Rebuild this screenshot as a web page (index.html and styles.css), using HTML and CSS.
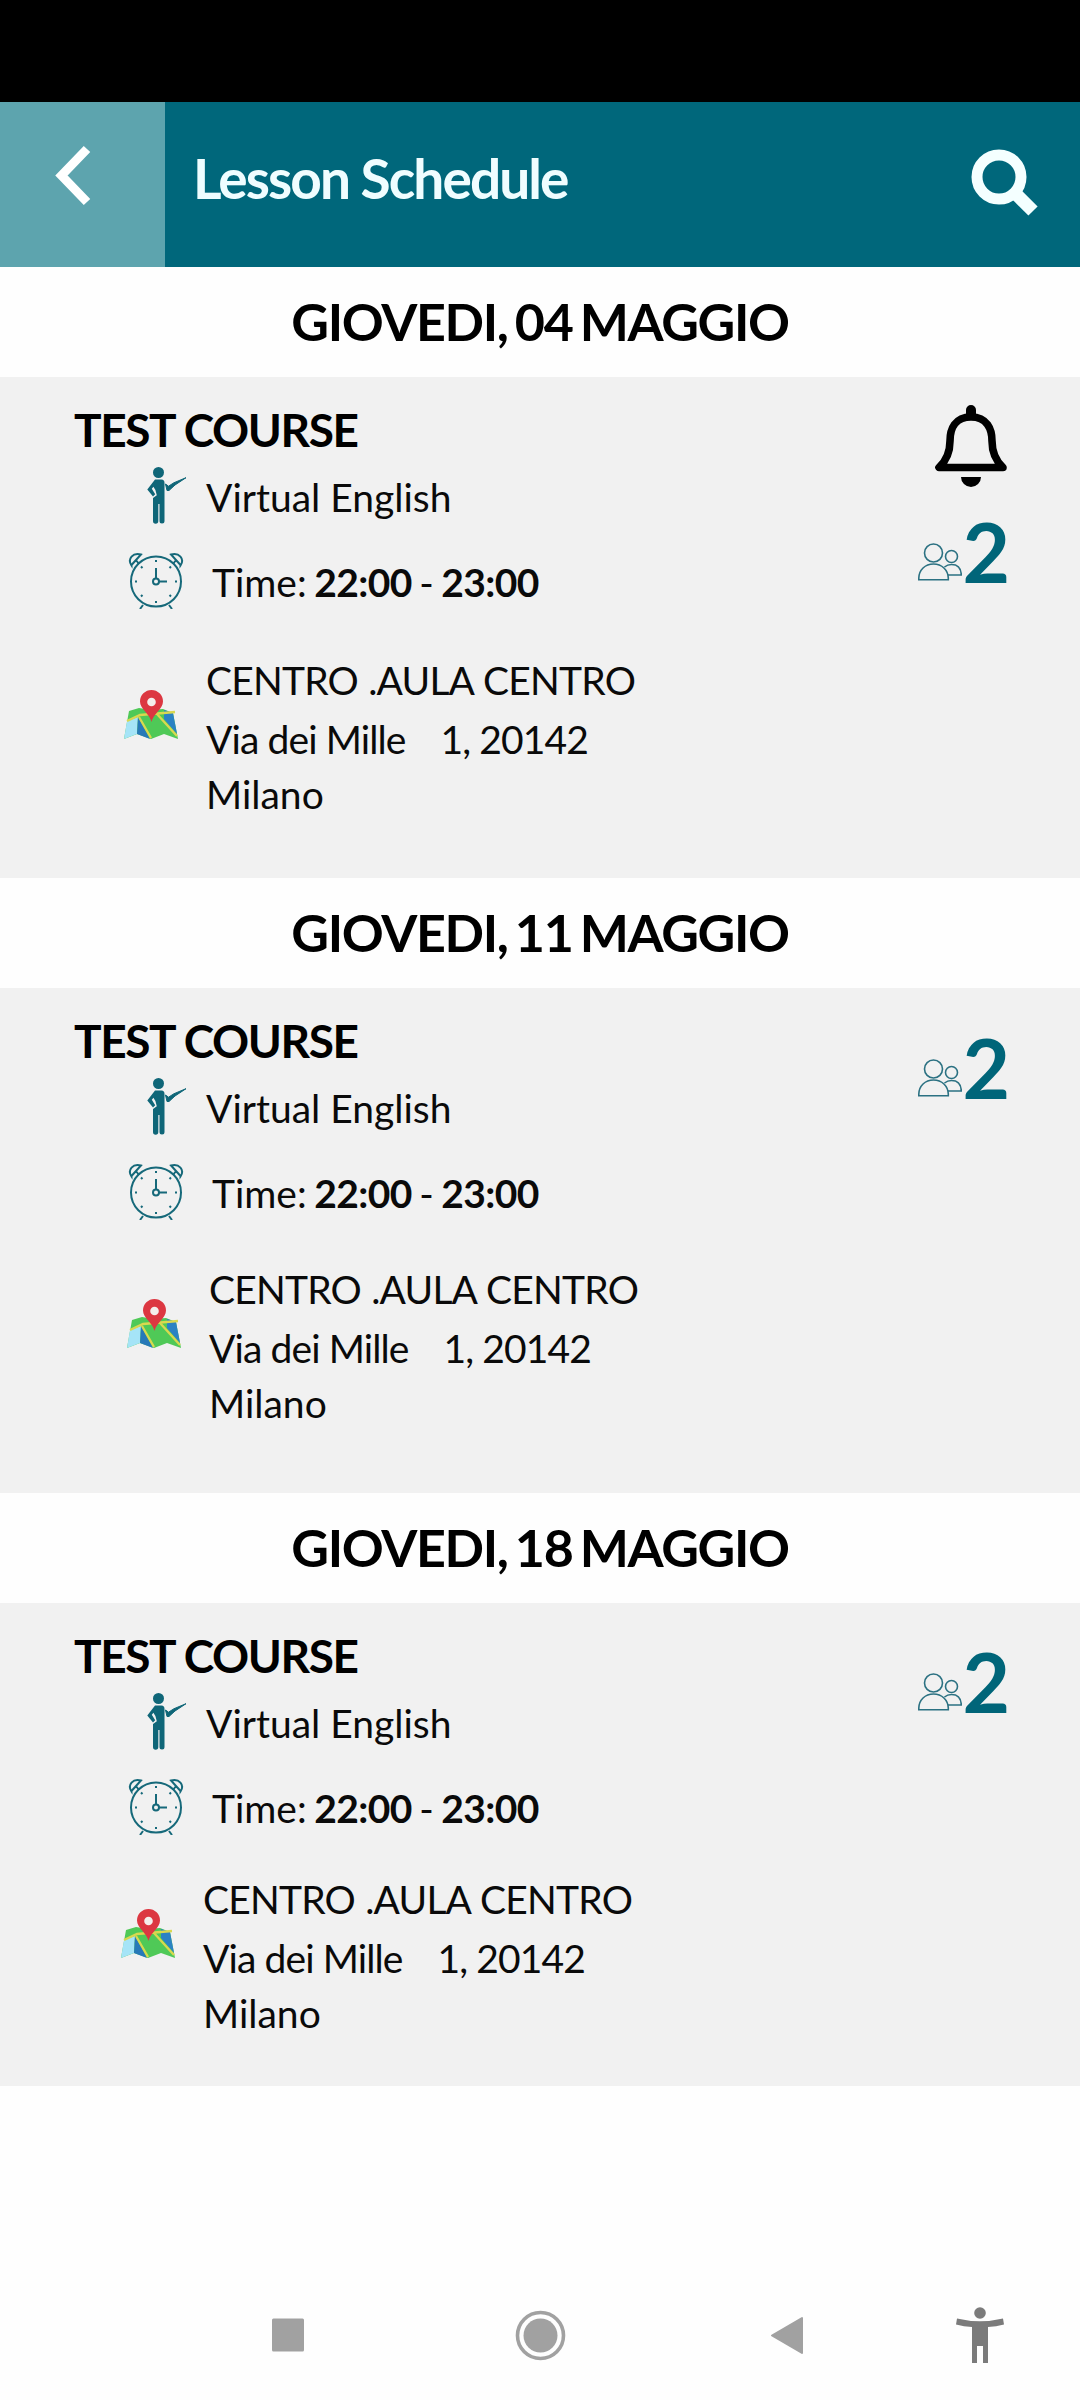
FILE: index.html
```html
<!DOCTYPE html>
<html lang="it">
<head>
    <meta charset="UTF-8">
    <meta name="viewport" content="width=device-width, initial-scale=1.0">
    <title>Lesson Schedule</title>
    <link rel="stylesheet" href="styles.css">
</head>
<body>

<!-- shared icons -->
<svg class="sprite" aria-hidden="true">
    <symbol id="teacher" viewBox="0 0 40 57">
        <circle cx="11.500" cy="5.500" r="5.500" fill="#0f6678"/>
        <path d="M8 12.500h6.500q3 0 3 3.500V54a2.300 2.300 0 0 1-5 0V37h-1.200v17a2.600 2.600 0 0 1-5.300 0V31l3.800-2.700-1.400-5.300-2-3.300-1.600 2 3.400 5.600-2.200 2.200L.3 22.500z" fill="#0f6678"/>
        <path d="M18.500 17l3 2.200 5.500-3.500 12-5-11 7.300-6 5.500h-2z" fill="#0f6678" stroke="#0f6678" stroke-width="1"/>
    </symbol>
    <symbol id="clock" viewBox="0 0 56 57">
        <g fill="none" stroke="#16697a" stroke-width="2">
            <circle cx="28" cy="29.500" r="25"/>
            <circle cx="28" cy="29.500" r="3"/>
            <path d="M28 26.500V16M31 29.500h8M15 53l-3 4M41 53l3 4"/>
            <path d="M3.500 13.500C-1 7 5 0 13 2.500L3.500 13zM52.500 13.500C57 7 51 0 43 2.500L52.500 13zM8 8l3 4M48 8l-3 4"/>
        </g>
        <path d="M28 8v2M28 49v2M7 29.500h2M47 29.500h2M13 14.500l1.500 1.500M43 14.500L41.500 16M13 44.500l1.500-1.500M43 44.500L41.500 43" stroke="#16697a" stroke-width="2"/>
    </symbol>
    <symbol id="map" viewBox="0 0 56 50">
        <path d="M6 21l10-3 12 2 12-1 10 4 5 26-14-5-13 5-14-5-13 5z" fill="#4fc957"/>
        <path d="M4 31l11-4-1 17-13 5z" fill="#a5e4f7"/>
        <path d="M15 27l12 22-13-5z" fill="#2779b8"/>
        <path d="M41 20l9 3 4 21-13-15z" fill="#2b82c3"/>
        <path d="M4 31l13-6L52 22M16 27l12 21M34 24l20 22" fill="none" stroke="#d9d84f" stroke-width="2.300"/>
        <path d="M28.500 32C27 24 17 19 17 11.500a11.500 11.500 0 0 1 23 0C40 19 30 24 28.500 32z" fill="#dc3741"/>
        <circle cx="28.500" cy="12" r="4.300" fill="#f4efec"/>
    </symbol>
    <symbol id="people" viewBox="0 0 44 38">
        <g fill="none" stroke="#2b7182" stroke-width="1.600">
            <circle cx="15.500" cy="10" r="9"/>
            <path d="M.8 36.700V35C1 27 7 21 15.500 21S30 27 30.300 35v1.700z"/>
            <circle cx="33.500" cy="13.500" r="6"/>
            <path d="M26.500 24q3-2.500 7-2.500 9.500 0 9.800 10.500H30"/>
        </g>
    </symbol>
</svg>

<div class="status-bar"></div>

<div class="header">
    <div class="back">
        <svg width="40" height="61" viewBox="0 0 40 61"><path d="M34 4L8.500 30.500 34 57" fill="none" stroke="#fff" stroke-width="9"/></svg>
    </div>
    <h1>Lesson Schedule</h1>
    <svg class="search" width="68" height="68" viewBox="0 0 68 68">
        <circle cx="28" cy="28" r="22" fill="none" stroke="#f4ffff" stroke-width="11"/>
        <path d="M43 43l19 19" stroke="#f4ffff" stroke-width="13"/>
    </svg>
</div>

<h2>GIOVEDI, 04 MAGGIO</h2>
<div class="lesson first">
    <div class="info">
        <h3>TEST COURSE</h3>
        <div class="row teacher"><svg><use href="#teacher"/></svg><span>Virtual English</span></div>
        <div class="row time"><svg><use href="#clock"/></svg><span>Time: <b>22:00</b> - <b>23:00</b></span></div>
        <div class="row place">
            <svg><use href="#map"/></svg>
            <div>
                <p class="room">CENTRO .AULA CENTRO</p>
                <p class="street">Via dei Mille <span class="number">1, 20142</span></p>
                <p class="city">Milano</p>
            </div>
        </div>
    </div>
    <div class="side">
        <svg width="72" height="82" viewBox="0 0 72 82">
            <path d="M36 12C20 12 15 24 15 36c0 12-4 20-11 26.500h64C61 56 57 48 57 36c0-12-5-24-21-24z" fill="none" stroke="#000" stroke-width="7.600" stroke-linejoin="round"/>
            <path d="M31 12V5a5 5 0 0 1 10 0v7zM26 72h20a10 10 0 0 1-20 0z"/>
        </svg>
        <div class="count"><svg><use href="#people"/></svg><span>2</span></div>
    </div>
</div>

<h2>GIOVEDI, 11 MAGGIO</h2>
<div class="lesson second">
    <div class="info">
        <h3>TEST COURSE</h3>
        <div class="row teacher"><svg><use href="#teacher"/></svg><span>Virtual English</span></div>
        <div class="row time"><svg><use href="#clock"/></svg><span>Time: <b>22:00</b> - <b>23:00</b></span></div>
        <div class="row place">
            <svg><use href="#map"/></svg>
            <div>
                <p class="room">CENTRO .AULA CENTRO</p>
                <p class="street">Via dei Mille <span class="number">1, 20142</span></p>
                <p class="city">Milano</p>
            </div>
        </div>
    </div>
    <div class="side">
        <div class="count"><svg><use href="#people"/></svg><span>2</span></div>
    </div>
</div>

<h2>GIOVEDI, 18 MAGGIO</h2>
<div class="lesson third">
    <div class="info">
        <h3>TEST COURSE</h3>
        <div class="row teacher"><svg><use href="#teacher"/></svg><span>Virtual English</span></div>
        <div class="row time"><svg><use href="#clock"/></svg><span>Time: <b>22:00</b> - <b>23:00</b></span></div>
        <div class="row place">
            <svg><use href="#map"/></svg>
            <div>
                <p class="room">CENTRO .AULA CENTRO</p>
                <p class="street">Via dei Mille <span class="number">1, 20142</span></p>
                <p class="city">Milano</p>
            </div>
        </div>
    </div>
    <div class="side">
        <div class="count"><svg><use href="#people"/></svg><span>2</span></div>
    </div>
</div>

<div class="nav-bar">
    <svg viewBox="0 0 1080 140">
        <rect x="272" y="58.500" width="32" height="33" rx="1.500" fill="#a1a1a1"/>
        <circle cx="540.500" cy="75.500" r="23" fill="none" stroke="#a1a1a1" stroke-width="3.600"/>
        <circle cx="540.500" cy="75.500" r="17" fill="#a1a1a1"/>
        <path d="M772 75.500L802 58v35z" fill="#a1a1a1" stroke="#a1a1a1" stroke-width="2" stroke-linejoin="round"/>
        <g fill="#7b7b7b">
            <circle cx="980" cy="53" r="5.800"/>
            <path d="M957 58.500q23 5.500 46 0l1 6q-8 2-16 2.500V103h-5V86h-6v17h-5V67q-8-.5-16-2.500z"/>
        </g>
    </svg>
</div>

</body>
</html>
```
FILE: styles.css
```css
body {
    margin: 0;
    height: 2400px;
    font-family: 'Lato', sans-serif;
    background: #fefefe;
    color: #0a0a0a;
    display: flex;
    flex-direction: column;
    overflow: hidden;
}

h1, h2, h3, p {
    margin: 0;
}

svg {
    display: block;
    flex-shrink: 0;
}

.sprite {
    position: absolute;
    width: 0;
    height: 0;
}

.status-bar {
    height: 102px;
    background: #000;
}

.header {
    display: flex;
    height: 165px;
    background: #00677b;
}

.back {
    width: 165px;
    padding: 43px 0 0 53px;
    box-sizing: border-box;
    background: #5da4ae;
}

h1 {
    flex: 1;
    padding-left: 28px;
    color: #effdff;
    font-size: 55px;
    line-height: 152px;
    letter-spacing: -1.9px;
}

.search {
    margin: 47px 41px 0 0;
}

h2 {
    height: 110px;
    line-height: 109px;
    text-align: center;
    font-size: 52px;
    letter-spacing: -1.35px;
    word-spacing: -4px;
    color: #000;
}

.lesson {
    display: flex;
    justify-content: space-between;
    padding: 28px 70px 0 74px;
    box-sizing: border-box;
    background: #f1f1f1;
}

.first {
    height: 501px;
}

.second {
    height: 505px;
}

.third {
    height: 483px;
}

h3 {
    font-size: 46px;
    line-height: 50px;
    letter-spacing: -1.4px;
    color: #000;
}

.row {
    display: flex;
    font-size: 39px;
    line-height: 60px;
    white-space: nowrap;
}

.teacher {
    margin-top: 12px;
    padding-left: 73px;
    gap: 19px;
}

.teacher svg {
    width: 40px;
    height: 57px;
}

.time {
    margin-top: 25px;
    padding-left: 54px;
    gap: 28px;
    word-spacing: -2.5px;
}

.time svg {
    width: 56px;
    height: 57px;
}

.time b {
    letter-spacing: -0.6px;
}

.place {
    margin-top: 39px;
    padding-left: 49px;
    gap: 27px;
}

.place svg {
    width: 56px;
    height: 50px;
    margin-top: 39px;
}

.room {
    line-height: 59px;
    letter-spacing: -0.8px;
    word-spacing: 1px;
}

.street {
    line-height: 58px;
    letter-spacing: -0.9px;
}

.city {
    line-height: 52px;
}

.number {
    margin-left: 26px;
}

.second .place {
    margin-top: 37px;
    padding-left: 52px;
}

.third .place {
    margin-top: 32px;
    padding-left: 46px;
}

.side {
    display: flex;
    flex-direction: column;
    align-items: flex-end;
}

.side > svg {
    margin-right: 3px;
}

.count {
    display: flex;
    margin-top: 22px;
    color: #006579;
    font-size: 82px;
    font-weight: bold;
    line-height: 84px;
}

.second .count {
    margin-top: 9px;
}

.third .count {
    margin-top: 8px;
}

.count svg {
    width: 44px;
    height: 38px;
    margin-top: 34px;
}

.nav-bar {
    margin-top: auto;
    height: 140px;
}
```
